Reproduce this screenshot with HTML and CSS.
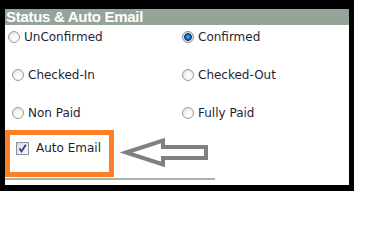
FILE: index.html
```html
<!DOCTYPE html>
<html>
<head>
<meta charset="utf-8">
<link rel="stylesheet" href="styles.css">
</head>
<body>
<div class="frame">
  <div class="hdr">Status &amp; Auto Email</div>
  <div class="opts">
    <label class="opt first"><span class="radio"></span>UnConfirmed</label>
    <label class="opt right"><span class="radio on"></span>Confirmed</label>
    <label class="opt"><span class="radio"></span>Checked-In</label>
    <label class="opt right"><span class="radio"></span>Checked-Out</label>
    <label class="opt"><span class="radio"></span>Non Paid</label>
    <label class="opt right"><span class="radio"></span>Fully Paid</label>
  </div>
  <div class="bottom">
    <div class="autobox">
      <span class="check"><svg width="13" height="13" viewBox="0 0 13 13"><path d="M3.5 6.5 L5.5 9.5 L9.8 2.8" fill="none" stroke="#2c3b93" stroke-width="1.7"/></svg></span>
      <span class="lbl">Auto Email</span>
    </div>
    <svg class="arrow" width="100" height="47" viewBox="0 0 100 47">
      <polygon points="12,22.5 49,10.5 49,17 92,17 92,28 49,28 49,34.5" fill="none" stroke="#808080" stroke-width="4" stroke-linejoin="miter" stroke-miterlimit="4"/>
    </svg>
  </div>
  <div class="rule"></div>
</div>
</body>
</html>
```
FILE: styles.css
```css
body {
  margin: 0;
  background: #fff;
}
.frame {
  width: 344px;
  height: 176px;
  border-style: solid;
  border-color: #000;
  border-width: 9px 5px 6px 5px;
  background: #fff;
  font-family: "DejaVu Sans", Verdana, sans-serif;
  font-size: 12px;
  color: #1f1f33;
}
.hdr {
  height: 16px;
  line-height: 16px;
  background: #95a498;
  color: #fff;
  font-family: "Liberation Sans", Arial, sans-serif;
  font-weight: bold;
  font-size: 15px;
  letter-spacing: -0.3px;
  padding-left: 1px;
  white-space: nowrap;
  overflow: hidden;
}
.opts {
  display: grid;
  grid-template-columns: 176px 1fr;
  row-gap: 26px;
  padding-top: 6px;
}
.opt {
  display: flex;
  align-items: center;
  gap: 4px;
  height: 12px;
  padding-left: 7px;
  white-space: nowrap;
}
.opt.first {
  padding-left: 3px;
}
.opt.right {
  padding-left: 1px;
}
.radio {
  width: 12px;
  height: 12px;
  box-sizing: border-box;
  border-radius: 50%;
  border: 1px solid #9a9c9d;
  background: radial-gradient(circle at 62% 66%, #ffffff 0, #f6f6f6 40%, #d6d6d6 100%);
  flex: none;
}
.radio.on {
  border-color: #8a8d90;
  background: radial-gradient(circle at 50% 50%, #7cc4f2 0, #1f74c0 1.8px, #0d3d78 3.6px, #e2e2e2 4.1px, #f6f6f6 100%);
}
.bottom {
  display: flex;
  align-items: flex-start;
  margin-top: 11px;
}
.autobox {
  width: 109px;
  height: 47px;
  box-sizing: border-box;
  border: 5px solid #ff7f27;
  padding: 7px 0 0 6px;
  display: flex;
  align-items: flex-start;
  gap: 7px;
}
.check {
  width: 13px;
  height: 13px;
  box-sizing: border-box;
  border: 1px solid #8f8f96;
  background: linear-gradient(135deg, #d6d7e3 0, #eeeef4 60%, #fafafc 100%);
  display: block;
  flex: none;
}
.check svg {
  display: block;
  margin: -1px 0 0 -1px;
}
.lbl {
  line-height: 13px;
  white-space: nowrap;
}
.arrow {
  display: block;
  flex: none;
}
.rule {
  width: 210px;
  border-top: 2px solid #a9b2aa;
  margin-top: 1px;
}
```
